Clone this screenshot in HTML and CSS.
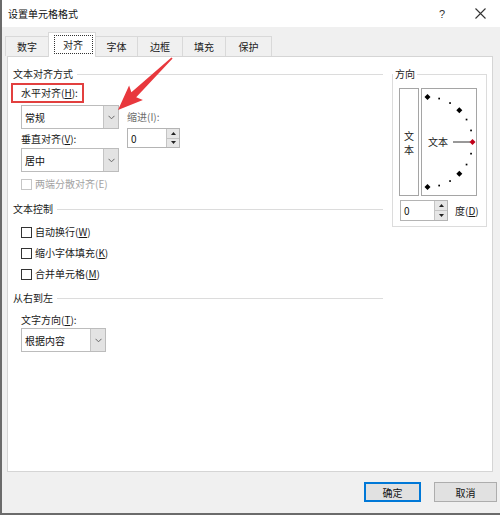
FILE: index.html
```html
<!DOCTYPE html>
<html lang="zh">
<head>
<meta charset="utf-8">
<title>设置单元格格式</title>
<link rel="stylesheet" href="styles.css">
</head>
<body>
<div class="window">
  <div class="titlebar">
    <span class="title">设置单元格格式</span>
    <span class="help">?</span>
    <span class="close"><svg width="11" height="11" viewBox="0 0 11 11"><path d="M0.5 0.5L10.5 10.5M10.5 0.5L0.5 10.5" stroke="#333" stroke-width="1.1" fill="none"/></svg></span>
  </div>
  <div class="tabs">
    <div class="tab w44">数字</div>
    <div class="tab active"><span class="focus">对齐</span></div>
    <div class="tab w42">字体</div>
    <div class="tab w45">边框</div>
    <div class="tab w43">填充</div>
    <div class="tab w46">保护</div>
  </div>
  <div class="panel">
    <div class="left">
      <div class="section first"><span>文本对齐方式</span><i class="rule"></i></div>
      <div class="align-grid">
        <div class="col-main">
          <div class="lbl"><span class="hl">水平对齐(<u>H</u>):</span></div>
          <div class="combo w98 m5"><span class="combo-text">常规</span><span class="combo-btn"><svg width="7" height="5" viewBox="0 0 7 5"><path d="M0.5 0.8L3.5 3.8L6.5 0.8" stroke="#666" fill="none"/></svg></span></div>
          <div class="lbl m3">垂直对齐(<u>V</u>):</div>
          <div class="combo w98 m2"><span class="combo-text">居中</span><span class="combo-btn"><svg width="7" height="5" viewBox="0 0 7 5"><path d="M0.5 0.8L3.5 3.8L6.5 0.8" stroke="#666" fill="none"/></svg></span></div>
        </div>
        <div class="col-indent">
          <div class="lbl dim">缩进(I):</div>
          <div class="spin s53">
            <span class="spin-val">0</span>
            <span class="spin-btns">
              <span class="sb"><svg width="5" height="3" viewBox="0 0 5 3"><path d="M2.5 0L5 3H0Z" fill="#222"/></svg></span>
              <span class="sb"><svg width="5" height="3" viewBox="0 0 5 3"><path d="M0 0H5L2.5 3Z" fill="#222"/></svg></span>
            </span>
          </div>
        </div>
      </div>
      <div class="check disabled m5"><span class="box"></span>两端分散对齐(E)</div>
      <div class="section m11"><span>文本控制</span><i class="rule"></i></div>
      <div class="check m9"><span class="box"></span>自动换行(<u>W</u>)</div>
      <div class="check m7"><span class="box"></span>缩小字体填充(<u>K</u>)</div>
      <div class="check m7"><span class="box"></span>合并单元格(<u>M</u>)</div>
      <div class="section m10"><span>从右到左</span><i class="rule"></i></div>
      <div class="lbl ind m8">文字方向(<u>T</u>):</div>
      <div class="combo w85 ind m1"><span class="combo-text">根据内容</span><span class="combo-btn"><svg width="7" height="5" viewBox="0 0 7 5"><path d="M0.5 0.8L3.5 3.8L6.5 0.8" stroke="#666" fill="none"/></svg></span></div>
    </div>
    <fieldset class="orient">
      <legend>方向</legend>
      <div class="orient-row">
        <div class="vtext"><span>文</span><span>本</span></div>
        <div class="dial">
          <svg width="54" height="106" viewBox="0 0 54 106">
            <g fill="#000">
              <path d="M5.5 5L8.5 8L5.5 11L2.5 8Z"/>
              <path d="M37.3 18.2L40.3 21.2L37.3 24.2L34.3 21.2Z"/>
              <path d="M37.3 81.8L40.3 84.8L37.3 87.8L34.3 84.8Z"/>
              <path d="M5.5 95L8.5 98L5.5 101L2.5 98Z"/>
              <rect x="16.3" y="8.7" width="1.7" height="1.7"/>
              <rect x="27.2" y="13.2" width="1.7" height="1.7"/>
              <rect x="43.7" y="29.7" width="1.7" height="1.7"/>
              <rect x="48.2" y="40.6" width="1.7" height="1.7"/>
              <rect x="48.2" y="63.8" width="1.7" height="1.7"/>
              <rect x="43.7" y="74.7" width="1.7" height="1.7"/>
              <rect x="27.2" y="91.2" width="1.7" height="1.7"/>
              <rect x="16.3" y="95.7" width="1.7" height="1.7"/>
            </g>
            <text x="6" y="56.5" class="dial-text">文本</text>
            <line x1="31" y1="53" x2="48" y2="53" stroke="#333" stroke-width="1"/>
            <path d="M50.5 50L53.5 53L50.5 56L47.5 53Z" fill="#c00018"/>
          </svg>
        </div>
      </div>
      <div class="deg-row">
        <div class="spin s48">
          <span class="spin-val">0</span>
          <span class="spin-btns">
            <span class="sb"><svg width="5" height="3" viewBox="0 0 5 3"><path d="M2.5 0L5 3H0Z" fill="#222"/></svg></span>
            <span class="sb"><svg width="5" height="3" viewBox="0 0 5 3"><path d="M0 0H5L2.5 3Z" fill="#222"/></svg></span>
          </span>
        </div>
        <span class="deg">度(<u>D</u>)</span>
      </div>
    </fieldset>
  </div>
  <div class="buttons">
    <div class="btn ok">确定</div>
    <div class="btn cancel">取消</div>
  </div>
  <svg class="arrow" width="70" height="70" viewBox="0 0 70 70"><path d="M62.6 8.4L26.2 47.3L32.9 49.9L8 60L19.1 35.5L21.4 42.3L61.4 7.6Z" fill="#e8383d"/></svg>
</div>
</body>
</html>
```

FILE: styles.css
```css
html, body {
  margin: 0;
  padding: 0;
}
body {
  font-family: "Noto Sans CJK SC", "Microsoft YaHei", "Noto Sans", sans-serif;
  font-size: 10px;
  color: #1a1a1a;
  background: #f0f0f0;
}
u {
  text-decoration: underline;
  text-underline-offset: 1px;
}
.window {
  width: 500px;
  height: 515px;
  box-sizing: border-box;
  background: #f0f0f0;
  border-left: 2px solid #6b6b6b;
  border-bottom: 2px solid #6b6b6b;
  position: relative;
  display: flex;
  flex-direction: column;
}
.titlebar {
  height: 27px;
  flex: 0 0 27px;
  background: #fff;
  display: flex;
  align-items: center;
  padding: 0 10px 0 6px;
}
.title {
  flex: 1;
  line-height: 14px;
  color: #111;
}
.help {
  width: 20px;
  text-align: center;
  font-family: "Liberation Sans", sans-serif;
  font-size: 11px;
  color: #333;
  margin-right: 18px;
}
.close {
  width: 20px;
  display: flex;
  justify-content: center;
}
.tabs {
  height: 29px;
  flex: 0 0 29px;
  display: flex;
  align-items: flex-end;
  padding-left: 3px;
  position: relative;
  z-index: 2;
}
.tab {
  height: 20px;
  box-sizing: border-box;
  border: 1px solid #d9d9d9;
  border-bottom: none;
  border-left: none;
  display: flex;
  align-items: center;
  justify-content: center;
  line-height: 14px;
  color: #1a1a1a;
}
.tab:first-child {
  border-left: 1px solid #d9d9d9;
}
.w44 { width: 44px; }
.w42 { width: 42px; }
.w45 { width: 45px; }
.w43 { width: 43px; }
.w46 { width: 46px; }
.tab.active {
  width: 48px;
  height: 25px;
  margin-bottom: -1px;
  background: #fff;
  border-left: 1px solid #d9d9d9;
  margin-left: -1px;
  align-items: flex-start;
  padding-top: 2px;
}
.focus {
  display: flex;
  align-items: center;
  justify-content: center;
  width: 39px;
  height: 19px;
  box-sizing: border-box;
  border: 1px dotted #333;
  margin-left: 2px;
}
.panel {
  margin-left: 5px;
  width: 486px;
  height: 416px;
  flex: 0 0 416px;
  box-sizing: border-box;
  border: 1px solid #d5d5d5;
  background: #fff;
  display: flex;
  align-items: flex-start;
}
.left {
  width: 376px;
  box-sizing: border-box;
  padding: 0 1px 0 5px;
}
.section {
  display: flex;
  align-items: center;
  line-height: 14px;
  height: 14px;
}
.section.first {
  margin-top: 10px;
}
.section span {
  margin-right: 4px;
}
.rule {
  flex: 1;
  height: 1px;
  background: #dcdcdc;
}
.lbl {
  line-height: 14px;
  height: 14px;
  white-space: nowrap;
}
.hl {
  position: relative;
  display: inline-block;
}
.hl::after {
  content: "";
  position: absolute;
  left: -10px;
  right: -6px;
  top: -3px;
  bottom: -3px;
  border: 2px solid #e2403f;
}
.align-grid {
  display: flex;
  margin-top: 5px;
  padding-left: 8px;
}
.col-main {
  width: 98px;
}
.col-indent {
  margin-left: 8px;
}
.col-indent .lbl {
  margin-top: 24px;
}
.dim {
  color: #6d6d6d;
}
.ind {
  margin-left: 8px;
}
.m1 { margin-top: 1px; }
.m2 { margin-top: 2px; }
.m3 { margin-top: 3px; }
.m5 { margin-top: 5px; }
.m7 { margin-top: 7px; }
.m8 { margin-top: 8px; }
.m9 { margin-top: 9px; }
.m10 { margin-top: 10px; }
.m11 { margin-top: 11px; }
.combo {
  display: flex;
  height: 24px;
  box-sizing: border-box;
  border: 1px solid #bcbcbc;
  background: #fff;
}
.w98 { width: 98px; }
.w85 { width: 85px; }
.combo-text {
  flex: 1;
  display: flex;
  align-items: center;
  padding-left: 3px;
  color: #111;
}
.combo-btn {
  width: 14px;
  background: #e3e3e3;
  border-left: 1px solid #c4c4c4;
  display: flex;
  align-items: center;
  justify-content: center;
}
.spin {
  display: flex;
  height: 20px;
  box-sizing: border-box;
  border: 1px solid #b4b4b4;
  background: #fff;
  margin-top: 4px;
}
.s53 { width: 53px; }
.s48 { width: 48px; height: 21px; margin-top: 0; }
.spin-val {
  flex: 1;
  display: flex;
  align-items: center;
  padding-left: 3px;
  color: #111;
}
.spin-btns {
  width: 12px;
  display: flex;
  flex-direction: column;
  border-left: 1px solid #c4c4c4;
}
.sb {
  flex: 1;
  background: #e6e6e6;
  display: flex;
  align-items: center;
  justify-content: center;
}
.sb + .sb {
  border-top: 1px solid #c4c4c4;
}
.check {
  display: flex;
  align-items: center;
  height: 14px;
  line-height: 14px;
  padding-left: 8px;
  white-space: nowrap;
}
.box {
  width: 11px;
  height: 11px;
  box-sizing: border-box;
  border: 1px solid #333;
  background: #fff;
  margin-right: 3px;
}
.check.disabled {
  color: #a3a3a3;
}
.check.disabled .box {
  border-color: #c6c6c6;
}
.orient {
  margin: 10px 0 0 8px;
  width: 95px;
  box-sizing: border-box;
  border: 1px solid #dcdcdc;
  padding: 0 5px 5px 6px;
  min-width: 0;
}
.orient legend {
  padding: 0 2px;
  margin-left: -6px;
  line-height: 14px;
}
.orient-row {
  display: flex;
  gap: 2px;
  margin-top: 7px;
}
.vtext {
  width: 20px;
  height: 108px;
  box-sizing: border-box;
  border: 1px solid #a5a5a5;
  display: flex;
  flex-direction: column;
  align-items: center;
  justify-content: center;
  line-height: 14px;
  padding-top: 2px;
}
.dial {
  width: 56px;
  height: 108px;
  box-sizing: border-box;
  border: 1px solid #a5a5a5;
}
.dial svg {
  display: block;
}
.dial-text {
  font-family: "Noto Sans CJK SC", "Microsoft YaHei", sans-serif;
  font-size: 10px;
  fill: #1a1a1a;
}
.deg-row {
  display: flex;
  align-items: center;
  margin-top: 4px;
  margin-left: 1px;
}
.deg {
  margin-left: 7px;
  line-height: 14px;
}
.buttons {
  display: flex;
  justify-content: flex-end;
  gap: 13px;
  padding-right: 3px;
  margin-top: 10px;
}
.btn {
  height: 20px;
  box-sizing: border-box;
  background: #e1e1e1;
  border: 1px solid #adadad;
  display: flex;
  align-items: center;
  justify-content: center;
  color: #111;
}
.btn.ok {
  width: 57px;
  border: 2px solid #0078d7;
}
.btn.cancel {
  width: 63px;
}
.arrow {
  position: absolute;
  left: 108px;
  top: 50px;
}
```
